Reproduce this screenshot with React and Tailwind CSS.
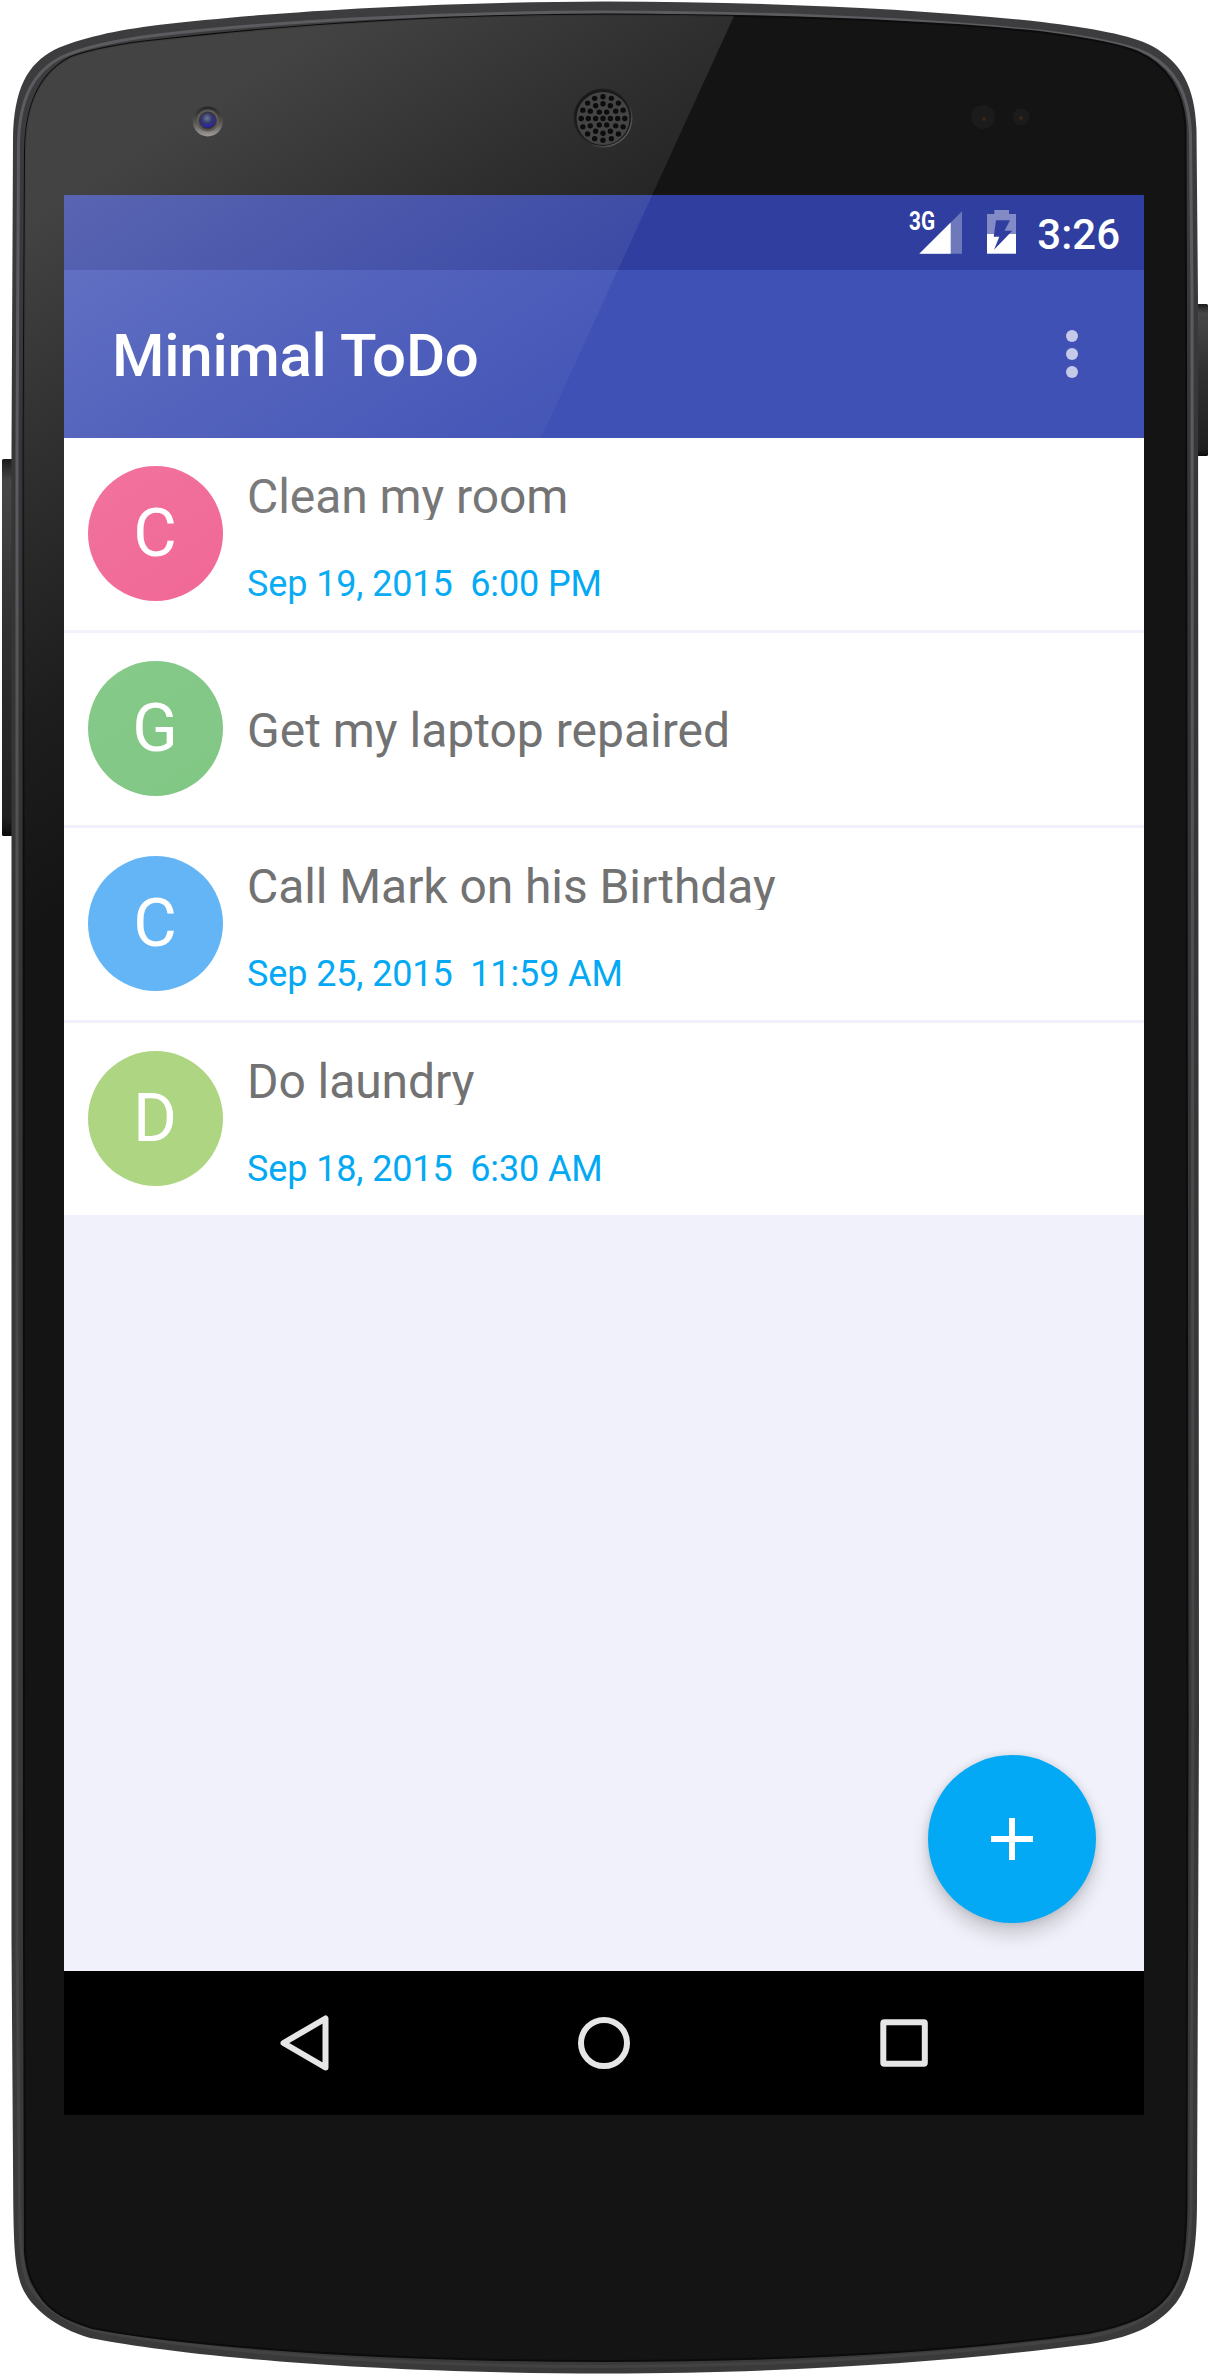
const OUTER =
  "M605 1.5 C430 2 270 12 158 25 C118 30 79 38 54 50 C28 64 13.5 88 13 140 L11.5 450 L11.5 1940 L13.3 2207 C14 2250 15 2268 22 2287 C31 2308 56 2328 90 2338 C150 2350 320 2373 605 2373.5 C800 2373 960 2361 1090 2344 C1140 2336 1160 2322 1176 2303 C1192 2281 1197 2250 1197 2200 L1199 1720 L1198 300 L1196.5 130 C1195 86 1181 62 1152 46 C1132 35 1090 28 1042 22 C910 8 760 2 605 1.5 Z";
const RIM =
  "M605 12 C430 12.500 270 22 158 35 C118 40 84 47 62 57 C34 71 19 98 18.500 145 L17 450 L17 1940 L19.500 2207 C20 2248 22 2264 27 2281 C36 2301 60 2320 92 2330 C152 2342 320 2366 605 2366.500 C800 2366 958 2354 1088 2337 C1132 2329 1154 2315 1169 2298 C1185 2277 1191 2248 1191 2200 L1193 1720 L1192 300 L1190.500 135 C1189 92 1174 68 1148 54 C1128 44 1088 37 1040 31 C910 18 760 12.500 605 12 Z";
const GLASS =
  "M605 14.500 C440 15 290 25 158 40 C120 44 90 50 71 57 C42 72 26 100 25 150 L23.500 450 L24 1940 L25 2253 C27 2275 33 2286 43 2300 C55 2314 68 2320 92 2328 C152 2340 330 2361 605 2361 C790 2361 950 2352 1088 2333 C1130 2325 1148 2315 1162 2302 C1181 2283 1186 2262 1186.500 2200 L1187.500 1720 L1186 300 L1185.500 125 C1183 92 1168 66 1138 52 C1120 44 1085 38 1040 32 C910 19 760 15 605 14.500 Z";

const HOLES = [
  [0, 0],
  ...[6, 12, 16].flatMap((count, ring) =>
    Array.from({ length: count }, (_, i) => {
      const a = (i * 2 * Math.PI) / count;
      const r = [7.4, 14.7, 21.8][ring];
      return [r * Math.cos(a), r * Math.sin(a)];
    })
  ),
];

const TODOS = [
  { title: "Clean my room", date: "Sep 19, 2015  6:00 PM", color: "bg-[#f06292]" },
  { title: "Get my laptop repaired", date: null, color: "bg-[#81c784]" },
  { title: "Call Mark on his Birthday", date: "Sep 25, 2015  11:59 AM", color: "bg-[#64b5f6]" },
  { title: "Do laundry", date: "Sep 18, 2015  6:30 AM", color: "bg-[#aed581]" },
];

function PhoneBody() {
  return (
    <svg className="absolute inset-0" width="1210" height="2375" viewBox="0 0 1210 2375" aria-hidden="true">
      <defs>
        <linearGradient id="metal" x1="0" y1="0" x2="0" y2="1">
          <stop offset="0" stopColor="#3d3d3f" />
          <stop offset="0.25" stopColor="#353537" />
          <stop offset="1" stopColor="#3a3a3b" />
        </linearGradient>
        <linearGradient id="edge" x1="0" y1="0" x2="0" y2="1">
          <stop offset="0" stopColor="#5c5c60" />
          <stop offset="0.2" stopColor="#5c5c60" />
          <stop offset="0.5" stopColor="#48484b" />
          <stop offset="1" stopColor="#434346" />
        </linearGradient>
        <linearGradient id="key" x1="0" y1="0" x2="0" y2="1">
          <stop offset="0" stopColor="#1c1c1c" />
          <stop offset="0.06" stopColor="#474747" />
          <stop offset="0.45" stopColor="#303030" />
          <stop offset="0.95" stopColor="#202020" />
          <stop offset="1" stopColor="#0b0b0b" />
        </linearGradient>
      </defs>
      <rect x="2" y="459" width="12" height="377" rx="1.500" fill="url(#key)" />
      <rect x="1196" y="304" width="12" height="152" rx="1.500" fill="url(#key)" />
      <path d={OUTER} fill="url(#metal)" />
      <path d={RIM} fill="none" stroke="url(#edge)" strokeWidth="3" />
      <path d={GLASS} fill="#141414" stroke="#0c0c0c" strokeWidth="2" />
      <circle cx="983" cy="117" r="12" fill="#1b1b1b" />
      <circle cx="984" cy="119" r="2" fill="#3a2418" />
      <circle cx="1021" cy="117" r="8.500" fill="#1b1b1b" />
      <circle cx="1021" cy="118" r="2" fill="#3a2418" />
    </svg>
  );
}

function Reflection() {
  return (
    <svg
      className="pointer-events-none absolute inset-0"
      width="1210"
      height="2375"
      viewBox="0 0 1210 2375"
      aria-hidden="true"
    >
      <defs>
        <linearGradient id="gloss" gradientUnits="userSpaceOnUse" x1="109" y1="168" x2="437" y2="670">
          <stop offset="0" stopColor="#fff" stopOpacity="0.2" />
          <stop offset="0.35" stopColor="#fff" stopOpacity="0.115" />
          <stop offset="0.7" stopColor="#fff" stopOpacity="0.04" />
          <stop offset="1" stopColor="#fff" stopOpacity="0" />
        </linearGradient>
        <radialGradient id="lens" cx="0.45" cy="0.35" r="0.7">
          <stop offset="0" stopColor="#6d7d92" />
          <stop offset="0.5" stopColor="#34366c" />
          <stop offset="0.8" stopColor="#2c26a8" />
          <stop offset="1" stopColor="#23233a" />
        </radialGradient>
        <linearGradient id="ring" x1="0" y1="0" x2="0" y2="1">
          <stop offset="0" stopColor="#262626" />
          <stop offset="0.55" stopColor="#5a5754" />
          <stop offset="1" stopColor="#a09d9b" />
        </linearGradient>
        <linearGradient id="grille" x1="0" y1="0" x2="1" y2="1">
          <stop offset="0" stopColor="#151515" />
          <stop offset="0.6" stopColor="#2c2c2c" />
          <stop offset="1" stopColor="#777" />
        </linearGradient>
        <clipPath id="glassClip">
          <path d={GLASS} />
        </clipPath>
      </defs>
      <path d="M0 0 H741.300 L24 1569 H0 Z" fill="url(#gloss)" clipPath="url(#glassClip)" />
      <g>
        <circle cx="207.800" cy="121.500" r="15" fill="url(#ring)" />
        <circle cx="207.800" cy="120.500" r="11" fill="#5d5a57" />
        <circle cx="207.800" cy="120.500" r="9" fill="#3a3839" />
        <circle cx="207.800" cy="120.500" r="7.500" fill="url(#lens)" />
      </g>
      <g transform="translate(603 118)">
        <circle r="29.500" fill="url(#grille)" />
        <circle r="28" fill="#181818" />
        <circle r="26.500" cy="0.500" fill="#444" />
        {HOLES.map(([x, y], i) => (
          <circle key={i} cx={x} cy={y + 0.5} r="2.700" fill="#0c0c0c" />
        ))}
      </g>
    </svg>
  );
}

function StatusBar() {
  return (
    <div className="flex h-[75px] shrink-0 items-start justify-end bg-[#303f9f] pr-6 text-white">
      <span className="mt-[12px] w-[25px] origin-left scale-x-[0.83] text-[25px] leading-[30px] font-bold">3G</span>
      <svg className="mt-[15px] -ml-[15px] h-11 w-[43px]" viewBox="0 0 43 44">
        <path d="M0.300 43.700 L43 1.300 V43.700 Z" fill="#fff" fillOpacity="0.3" />
        <path d="M0.300 43.700 L31.700 12.500 V43.700 Z" fill="#fff" />
      </svg>
      <svg className="mt-[15px] ml-[25px] h-11 w-[29px]" viewBox="0 0 29 44">
        <path d="M7.300 0 H22 V4 H29 V24 H0 V4 H7.300 Z" fill="#fff" fillOpacity="0.4" />
        <path d="M0 24 H29 V43.700 H0 Z" fill="#fff" />
        <path d="M9 10.300 H23 L17.500 20.700 H25.300 L7 39.700 L12.300 26.700 H6.700 Z" fill="#303f9f" />
      </svg>
      <span className="mt-[15px] ml-[21px] text-[42px] leading-[50px] font-medium">3:26</span>
    </div>
  );
}

function AppBar() {
  return (
    <header className="flex h-[168px] shrink-0 items-center justify-between bg-[#3f51b5] pr-[66px] pl-12 text-white">
      <h1 className="pt-1 text-[60px] leading-[70px] font-medium tracking-[-0.25px]">Minimal ToDo</h1>
      <button className="flex flex-col gap-1.5" aria-label="More options">
        <span className="size-3 rounded-full bg-[#c5cae9]" />
        <span className="size-3 rounded-full bg-[#c5cae9]" />
        <span className="size-3 rounded-full bg-[#c5cae9]" />
      </button>
    </header>
  );
}

function TodoRow({ todo }) {
  return (
    <li className="flex h-[192px] items-start bg-white pl-6">
      <span
        className={`mt-7 flex size-[135px] shrink-0 items-center justify-center rounded-full pr-px text-[67px] leading-none text-white ${todo.color}`}
      >
        {todo.title[0]}
      </span>
      {todo.date ? (
        <div className="ml-6 h-full pt-[31px]">
          <p className="h-[51px] overflow-hidden text-[48px] leading-[56px] tracking-[-0.07px] whitespace-nowrap text-[#727272]">
            {todo.title}
          </p>
          <p className="mt-[43px] text-[36px] leading-[42px] tracking-[-0.12px] whitespace-pre text-[#03a9f4]">
            {todo.date}
          </p>
        </div>
      ) : (
        <p className="mt-[70px] ml-6 text-[48px] leading-[56px] text-[#727272]">{todo.title}</p>
      )}
    </li>
  );
}

function NavBar() {
  return (
    <nav className="flex h-36 shrink-0 justify-center bg-black">
      {[
        <path key="back" d="M7.500 28 L49.500 3.500 V52.500 Z" />,
        <circle key="home" cx="28" cy="28" r="23" />,
        <rect key="recent" x="7.300" y="7.300" width="41.500" height="41.500" rx="1" />,
      ].map((shape) => (
        <button key={shape.key} className="flex w-[300px] items-center justify-center" aria-label={shape.key}>
          <svg
            className="size-14"
            viewBox="0 0 56 56"
            fill="none"
            stroke="#e6e6e6"
            strokeWidth="6"
            strokeLinejoin="round"
          >
            {shape}
          </svg>
        </button>
      ))}
    </nav>
  );
}

export default function App() {
  return (
    <div className="relative h-[2375px] w-[1210px] overflow-hidden bg-white pt-[195px] pl-16 font-['Roboto',sans-serif]">
      <PhoneBody />
      <div className="relative flex h-[1920px] w-[1080px] flex-col bg-[#f0f1fa]">
        <StatusBar />
        <AppBar />
        <main className="relative grow">
          <ul className="flex flex-col gap-[3px]">
            {TODOS.map((todo) => (
              <TodoRow key={todo.title} todo={todo} />
            ))}
          </ul>
          <button
            className="absolute right-12 bottom-12 flex size-[168px] items-center justify-center rounded-full bg-[#03a9f4] shadow-[0_12px_18px_rgba(0,0,0,0.17),0_0_8px_rgba(0,0,0,0.12)]"
            aria-label="Add"
          >
            <svg className="size-[42px]" viewBox="0 0 42 42" fill="#fff">
              <path d="M18 0 H24 V18 H42 V24 H24 V42 H18 V24 H0 V18 H18 Z" />
            </svg>
          </button>
        </main>
        <NavBar />
      </div>
      <Reflection />
    </div>
  );
}
